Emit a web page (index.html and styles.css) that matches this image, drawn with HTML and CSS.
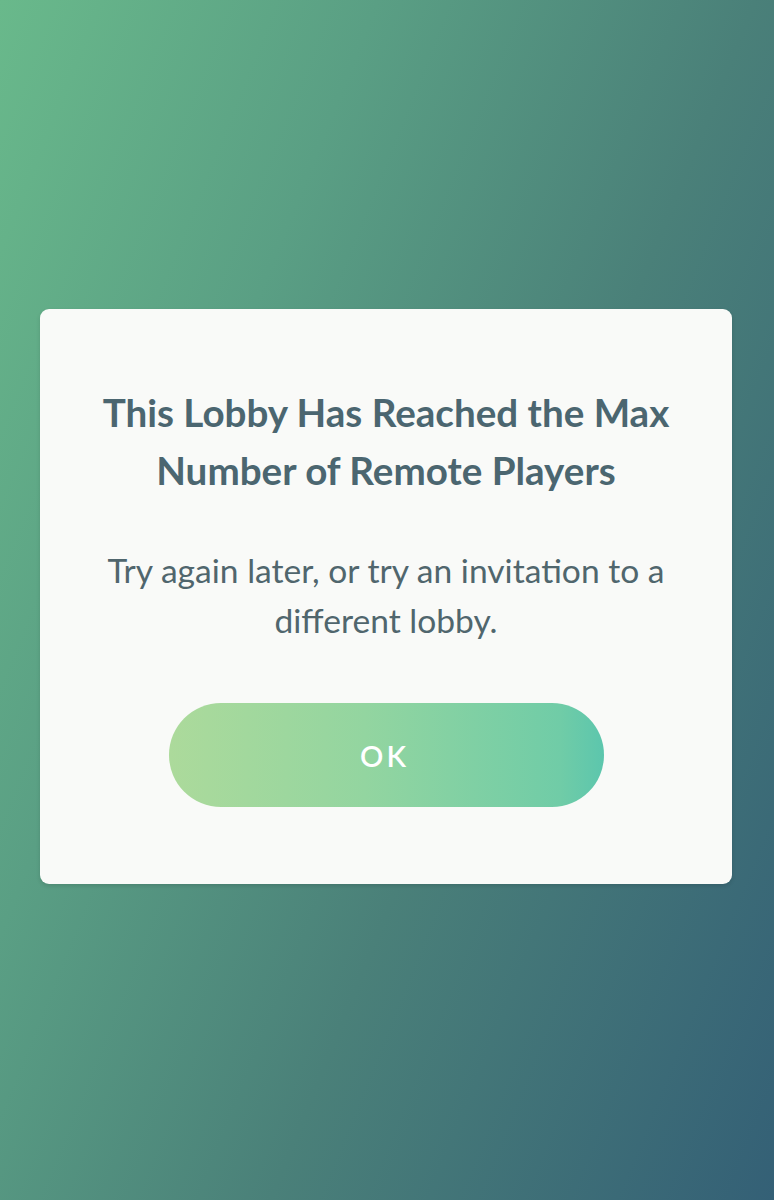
FILE: index.html
```html
<!DOCTYPE html>
<html lang="en">
<head>
  <meta charset="UTF-8" />
  <meta name="viewport" content="width=device-width, initial-scale=1.0"/>
  <title>Lobby Full</title>
  <link rel="stylesheet" href="styles.css">
</head>
<body>
  <div class="dialog">
    <h2 class="dialog-title">This Lobby Has Reached the Max Number of Remote Players</h2>
    <p class="dialog-text">Try again later, or try an invitation to a different lobby.</p>
    <button class="dialog-btn">OK</button>
  </div>
</body>
</html>
```

FILE: styles.css
```css
body {
  margin: 0;
  height: 1200px;
  background: linear-gradient(112deg, #69b98b 0%, #5a9f84 30%, #4a8079 60%, #346076 100%);
  font-family: Lato, "Open Sans", sans-serif;
  padding-top: 309px;
  box-sizing: border-box;
}

.dialog {
  margin: 0 42px 0 40px;
  background: #f9faf8;
  border-radius: 9px;
  box-shadow: 0 2px 4px rgba(0, 0, 0, 0.12);
  padding: 74px 50px 77px;
  text-align: center;
  display: flex;
  flex-direction: column;
  align-items: center;
}

.dialog-title {
  margin: 0;
  font-size: 38.6px;
  font-weight: 700;
  line-height: 58px;
  color: #4b6670;
}

.dialog-text {
  margin: 46px 0 0;
  font-size: 33.6px;
  font-weight: 400;
  line-height: 50px;
  color: #50666d;
}

.dialog-btn {
  margin-top: 58px;
  width: 435px;
  height: 104px;
  border: none;
  border-radius: 52px;
  background: linear-gradient(90deg, #acda9b 0%, #93d5a0 45%, #70cca7 90%, #5cc6ad 100%);
  color: #ffffff;
  font-family: Lato, sans-serif;
  font-size: 29px;
  font-weight: 600;
  letter-spacing: 3px;
  padding-left: 3px;
}
```
